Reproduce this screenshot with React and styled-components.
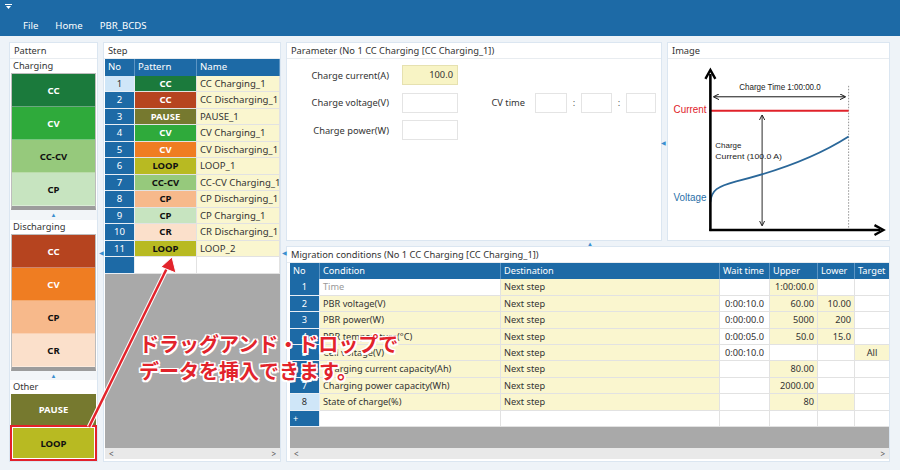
import React from 'react'
import styled, { createGlobalStyle } from 'styled-components'

const Global = createGlobalStyle`
  html, body { margin: 0; padding: 0; background: #f4f6f9; }
  * { box-sizing: border-box; }
`

const BLUE = '#1d6aa6'
const YELLOW = '#faf6cf'

const Page = styled.div`
  width: 900px; height: 470px;
  position: relative; overflow: hidden;
  display: flex; flex-direction: column;
  background: #f4f6f9;
  font-family: "Noto Sans", "Open Sans", sans-serif;
  font-size: 9.3px; color: #333;
`
const TitleBar = styled.div`
  height: 14px; flex-shrink: 0; background: ${BLUE};
  display: flex; align-items: center; padding-left: 5px;
`
const MenuBar = styled.div`
  height: 22px; flex-shrink: 0; background: ${BLUE};
  display: flex; align-items: center; gap: 17px;
  padding-left: 23px; color: #fff; font-size: 9.6px;
`
const Workspace = styled.div`
  flex: 1; min-height: 0;
  display: grid; grid-template-columns: 89px 178px 604px; column-gap: 5px;
  padding: 6px 10px 8px 9px;
  background: #eef3f8;
`
const Panel = styled.div`
  background: #fff;
  border: 1px solid #dbe6f1;
  display: flex; flex-direction: column;
  min-height: 0; overflow: hidden;
`
const PanelTitle = styled.div`
  height: 16px; line-height: 15px; padding-left: 4px;
  border-bottom: 1px solid #e8ecf0; color: #333;
  white-space: nowrap; flex-shrink: 0;
`

/* left pattern panel */
const SectionLabel = styled.div`
  height: 14px; line-height: 13px; padding-left: 3px;
  background: #fff; flex-shrink: 0;
`
const Group = styled.div`
  margin: 0 1px; border: 1px solid #bdbdbd;
  border-bottom: 4px solid #9c9c9c;
  display: flex; flex-direction: column; flex-shrink: 0;
`
const OtherGroup = styled.div`
  margin: 0 1px; display: flex; flex-direction: column; flex-shrink: 0;
`
const PatternButton = styled.div`
  height: ${p => p.$h || 33}px;
  background: ${p => p.$bg};
  color: ${p => p.$fg};
  font-weight: 700; font-size: 9.5px;
  display: flex; align-items: center; justify-content: center;
  border-bottom: 1px solid rgba(255,255,255,0.35);
  ${p => p.$marked && `outline: 2px solid #e3212b; outline-offset: -1px; border: 2px solid #fff;`}
`
const Spacer = styled.div`
  height: ${p => p.$h}px; flex-shrink: 0;
  display: flex; align-items: center; justify-content: center;
  color: #3b8ed0; font-size: 6px; background: #f2f5f8;
`

/* tables */
const Table = styled.div`
  display: grid; grid-template-columns: ${p => p.$cols};
  grid-auto-rows: ${p => p.$row || 16.4}px;
  flex-shrink: 0;
`
const Head = styled.div`
  background: ${BLUE}; color: #fff;
  line-height: 16px; padding-left: 3px;
  border-right: 1px solid #5c95c4; white-space: nowrap; overflow: hidden;
`
const Cell = styled.div`
  background: ${p => p.$bg || '#fff'};
  color: ${p => p.$fg || '#333'};
  font-weight: ${p => (p.$bold ? 700 : 400)};
  font-size: ${p => (p.$bold ? '9.5px' : 'inherit')};
  text-align: ${p => p.$align || 'left'};
  padding: 0 3px;
  line-height: 15px; white-space: nowrap; overflow: hidden;
  border-right: 1px solid #e2e2e2; border-bottom: 1px solid #e2e2e2;
`
const NoCell = styled(Cell)`
  background: ${p => (p.$sel ? '#cfe6f8' : BLUE)};
  color: ${p => (p.$sel ? '#333' : '#fff')};
  text-align: ${p => (p.$plus ? 'left' : 'center')};
  border-right: 1px solid #e8eef4; border-bottom: 1px solid #e8eef4;
`
const GrayFill = styled.div`
  flex: 1; background: #a9a9a9;
`
const HScroll = styled.div`
  height: 11px; background: #e9e9e9; flex-shrink: 0;
  display: flex; justify-content: space-between; align-items: center;
  padding: 0 4px; font-size: 8px; color: #555;
`
const TableArea = styled.div`
  flex: 1; display: flex; flex-direction: column; min-height: 0;
  margin: 0 0 2px ${p => p.$left || 1}px;
  font-size: ${p => p.$fs || 9.3}px;
`

/* right side */
const RightCol = styled.div`
  display: grid; grid-template-rows: 199px 1fr; row-gap: 5px; min-height: 0;
`
const TopRow = styled.div`
  display: grid; grid-template-columns: 376px 223px; column-gap: 5px; min-height: 0;
`
const Form = styled.div`
  padding-top: 6px; display: flex; flex-direction: column; gap: 7.5px;
`
const FormRow = styled.div`
  display: flex; align-items: center; height: 20px;
`
const Label = styled.div`
  width: ${p => p.$w}px; text-align: right; margin-right: ${p => p.$mr}px;
  white-space: nowrap;
`
const Input = styled.div`
  width: ${p => p.$w}px; height: 20px;
  background: ${p => (p.$filled ? '#f8f4c5' : '#fff')};
  border: 1px solid ${p => (p.$filled ? '#e6e1b0' : '#e4e4e4')};
  text-align: right; padding-right: 4px; line-height: 18px;
`
const Colon = styled.div`
  width: 14px; text-align: center; color: #555;
`

const Overlay = styled.div`
  position: absolute; left: 139px; top: 330px;
  font-family: "Noto Sans CJK JP", sans-serif; font-weight: 700;
  font-size: 20px; line-height: 27px; color: #e2232b;
  text-shadow: -1.5px -1.5px 0 #fff, 1.5px -1.5px 0 #fff, -1.5px 1.5px 0 #fff, 1.5px 1.5px 0 #fff,
    0 1.5px 0 #fff, 0 -1.5px 0 #fff, 1.5px 0 0 #fff, -1.5px 0 0 #fff;
  pointer-events: none;
`
const ArrowLayer = styled.svg`
  position: absolute; left: 0; top: 0; pointer-events: none;
`
const Marker = styled.div`
  position: absolute; left: ${p => p.$x}px; top: ${p => p.$y}px;
  font-size: 6px; color: #3b8ed0; line-height: 6px;
`

const charging = [
  { t: 'CC', bg: '#1b7a3c', fg: '#fff' },
  { t: 'CV', bg: '#2faa3b', fg: '#fff' },
  { t: 'CC-CV', bg: '#96c97c', fg: '#111' },
  { t: 'CP', bg: '#c7e4c0', fg: '#111' },
]
const discharging = [
  { t: 'CC', bg: '#b6441f', fg: '#fff' },
  { t: 'CV', bg: '#ef7d22', fg: '#fff' },
  { t: 'CP', bg: '#f7b98b', fg: '#111' },
  { t: 'CR', bg: '#fbe0cb', fg: '#111' },
]
const P = {
  ccC: ['CC', '#1b7a3c', '#fff'], ccD: ['CC', '#b6441f', '#fff'], pause: ['PAUSE', '#76792f', '#fff'],
  cvC: ['CV', '#2faa3b', '#fff'], cvD: ['CV', '#ef7d22', '#fff'], loop: ['LOOP', '#b8ba22', '#111'],
  cccv: ['CC-CV', '#96c97c', '#111'], cpD: ['CP', '#f7b98b', '#111'], cpC: ['CP', '#c7e4c0', '#111'],
  crD: ['CR', '#fbe0cb', '#111'],
}
const steps = [
  ['ccC', 'CC Charging_1'], ['ccD', 'CC Discharging_1'], ['pause', 'PAUSE_1'], ['cvC', 'CV Charging_1'],
  ['cvD', 'CV Discharging_1'], ['loop', 'LOOP_1'], ['cccv', 'CC-CV Charging_1'], ['cpD', 'CP Discharging_1'],
  ['cpC', 'CP Charging_1'], ['crD', 'CR Discharging_1'], ['loop', 'LOOP_2'],
]

// y = yellow flags for wait / upper / lower / target
const migrations = [
  { c: 'Time', grey: true, w: '', u: '1:00:00.0', l: '', t: '', y: [0, 1, 0, 0] },
  { c: 'PBR voltage(V)', w: '0:00:10.0', u: '60.00', l: '10.00', t: '', y: [0, 1, 1, 0] },
  { c: 'PBR power(W)', w: '0:00:00.0', u: '5000', l: '200', t: '', y: [0, 1, 1, 0] },
  { c: 'PBR temperature(°C)', w: '0:00:05.0', u: '50.0', l: '15.0', t: '', y: [0, 1, 1, 0] },
  { c: 'Cell voltage(V)', w: '0:00:10.0', u: '', l: '', t: 'All', y: [0, 0, 0, 1] },
  { c: 'Charging current capacity(Ah)', w: '', u: '80.00', l: '', t: '', y: [0, 1, 0, 0] },
  { c: 'Charging power capacity(Wh)', w: '', u: '2000.00', l: '', t: '', y: [0, 1, 0, 0] },
  { c: 'State of charge(%)', w: '', u: '80', l: '', t: '', y: [0, 1, 1, 0] },
]

function Chart() {
  return (
    <svg width="223" height="182" viewBox="667 59 223 182" style={{ display: 'block' }}>
      <defs>
        <marker id="ah" markerWidth="6" markerHeight="6" refX="5" refY="3" orient="auto-start-reverse">
          <path d="M0 0 L6 3 L0 6" fill="none" stroke="#111" strokeWidth="1" />
        </marker>
      </defs>
      <line x1="848" y1="86" x2="848" y2="230" stroke="#777" strokeWidth="0.8" strokeDasharray="1.5 1.5" />
      <line x1="713" y1="97" x2="844" y2="97" stroke="#111" strokeWidth="1" markerStart="url(#ah)" markerEnd="url(#ah)" />
      <text x="779" y="90" textAnchor="middle" fontSize="8.5" fontFamily="Liberation Sans, sans-serif" fill="#222" textLength="82" lengthAdjust="spacingAndGlyphs">Charge Time 1:00:00.0</text>
      <line x1="708" y1="111" x2="848" y2="111" stroke="#e0222a" strokeWidth="2" />
      <line x1="761" y1="116" x2="761" y2="226" stroke="#111" strokeWidth="0.9" markerStart="url(#ah)" markerEnd="url(#ah)" />
      <path d="M709 203 C710 191 716 187 735 182 C772 173 815 158 848 137" fill="none" stroke="#2a6799" strokeWidth="1.8" />
      <text x="672" y="113" fontSize="11" fontFamily="Liberation Sans, sans-serif" fill="#e0222a" textLength="33" lengthAdjust="spacingAndGlyphs">Current</text>
      <text x="672" y="202" fontSize="11" fontFamily="Liberation Sans, sans-serif" fill="#2a6fa8" textLength="33" lengthAdjust="spacingAndGlyphs">Voltage</text>
      <text x="714" y="149" fontSize="8" fontFamily="Liberation Sans, sans-serif" fill="#222">Charge</text>
      <text x="714" y="160" fontSize="8" fontFamily="Liberation Sans, sans-serif" fill="#222" textLength="67" lengthAdjust="spacingAndGlyphs">Current  (100.0 A)</text>
      <line x1="709" y1="74" x2="709" y2="232" stroke="#000" strokeWidth="2.6" />
      <path d="M704 79 L709 70 L714 79" fill="none" stroke="#000" strokeWidth="2.4" />
      <line x1="708" y1="231" x2="880" y2="231" stroke="#000" strokeWidth="2.6" />
      <path d="M874 226 L883 231 L874 236" fill="none" stroke="#000" strokeWidth="2.4" />
    </svg>
  )
}

export default function App() {
  return (
    <Page>
      <Global />
      <TitleBar>
        <svg width="7" height="6" viewBox="0 0 7 6">
          <line x1="0" y1="0.5" x2="7" y2="0.5" stroke="#fff" />
          <path d="M1 2 L6 2 L3.5 5 Z" fill="#fff" />
        </svg>
      </TitleBar>
      <MenuBar>
        <span>File</span>
        <span>Home</span>
        <span>PBR_BCDS</span>
      </MenuBar>

      <Workspace>
        <Panel>
          <PanelTitle>Pattern</PanelTitle>
          <SectionLabel>Charging</SectionLabel>
          <Group>
            {charging.map(b => (
              <PatternButton key={b.t} $bg={b.bg} $fg={b.fg}>{b.t}</PatternButton>
            ))}
          </Group>
          <Spacer $h={10}>▲</Spacer>
          <SectionLabel>Discharging</SectionLabel>
          <Group>
            {discharging.map(b => (
              <PatternButton key={b.t} $bg={b.bg} $fg={b.fg}>{b.t}</PatternButton>
            ))}
          </Group>
          <Spacer $h={9}>▲</Spacer>
          <SectionLabel>Other</SectionLabel>
          <OtherGroup>
            <PatternButton $bg="#76792f" $fg="#fff" $h={32}>PAUSE</PatternButton>
            <PatternButton $bg="#b8ba22" $fg="#111" $h={34} $marked>LOOP</PatternButton>
          </OtherGroup>
        </Panel>

        <Panel>
          <PanelTitle>Step</PanelTitle>
          <TableArea $fs={9.6}>
            <Table $cols="30px 62px 1fr" $row={16.5}>
              <Head>No</Head><Head>Pattern</Head><Head>Name</Head>
              {steps.map(([k, name], i) => {
                const [t, bg, fg] = P[k]
                return (
                  <React.Fragment key={i}>
                    <NoCell $sel={i === 0}>{i + 1}</NoCell>
                    <Cell $bg={bg} $fg={fg} $bold $align="center">{t}</Cell>
                    <Cell $bg={YELLOW}>{name}</Cell>
                  </React.Fragment>
                )
              })}
              <NoCell /><Cell /><Cell />
            </Table>
            <GrayFill />
            <HScroll><span>&lt;</span><span>&gt;</span></HScroll>
          </TableArea>
        </Panel>

        <RightCol>
          <TopRow>
            <Panel>
              <PanelTitle>Parameter (No 1 CC Charging [CC Charging_1])</PanelTitle>
              <Form>
                <FormRow>
                  <Label $w={102} $mr={13}>Charge current(A)</Label>
                  <Input $w={56} $filled>100.0</Input>
                </FormRow>
                <FormRow>
                  <Label $w={102} $mr={13}>Charge voltage(V)</Label>
                  <Input $w={56} />
                  <Label $w={67} $mr={10}>CV time</Label>
                  <Input $w={32} />
                  <Colon>:</Colon>
                  <Input $w={31} />
                  <Colon>:</Colon>
                  <Input $w={30} />
                </FormRow>
                <FormRow>
                  <Label $w={102} $mr={13}>Charge power(W)</Label>
                  <Input $w={56} />
                </FormRow>
              </Form>
            </Panel>
            <Panel>
              <PanelTitle>Image</PanelTitle>
              <Chart />
            </Panel>
          </TopRow>

          <Panel>
            <PanelTitle>Migration conditions (No 1 CC Charging [CC Charging_1])</PanelTitle>
            <TableArea $left={3} $fs={9.2}>
              <Table $cols="30px 181px 219px 50px 48px 37px 35px">
                <Head>No</Head><Head>Condition</Head><Head>Destination</Head>
                <Head>Wait time</Head><Head>Upper</Head><Head>Lower</Head><Head>Target</Head>
                {migrations.map((m, i) => (
                  <React.Fragment key={i}>
                    <NoCell $sel={i === 7}>{i + 1}</NoCell>
                    <Cell $bg={m.grey ? '#fff' : YELLOW} $fg={m.grey ? '#999' : '#333'}>{m.c}</Cell>
                    <Cell $bg={YELLOW}>Next step</Cell>
                    <Cell $bg={m.y[0] ? YELLOW : '#fff'} $align="center">{m.w}</Cell>
                    <Cell $bg={m.y[1] ? YELLOW : '#fff'} $align="right">{m.u}</Cell>
                    <Cell $bg={m.y[2] ? YELLOW : '#fff'} $align="right">{m.l}</Cell>
                    <Cell $bg={m.y[3] ? YELLOW : '#fff'} $align="center">{m.t}</Cell>
                  </React.Fragment>
                ))}
                <NoCell $plus>+</NoCell>
                <Cell /><Cell /><Cell /><Cell /><Cell /><Cell />
              </Table>
              <GrayFill />
              <HScroll><span>&lt;</span><span>&gt;</span></HScroll>
            </TableArea>
          </Panel>
        </RightCol>
      </Workspace>

      <Marker $x={99} $y={250}>◀</Marker>
      <Marker $x={282} $y={250}>◀</Marker>
      <Marker $x={661} $y={140}>◀</Marker>
      <Marker $x={587} $y={241}>▲</Marker>

      <ArrowLayer width="900" height="470" viewBox="0 0 900 470">
        <line x1="89" y1="427" x2="168" y2="266" stroke="#fff" strokeWidth="4.5" />
        <line x1="89" y1="427" x2="168" y2="266" stroke="#e2232b" strokeWidth="2.5" />
        <path d="M172 257 L176 273 L161 267 Z" fill="#e2232b" stroke="#fff" strokeWidth="1" />
      </ArrowLayer>
      <Overlay>
        ドラッグアンド・ドロップで<br />データを挿入できます。
      </Overlay>
    </Page>
  )
}
